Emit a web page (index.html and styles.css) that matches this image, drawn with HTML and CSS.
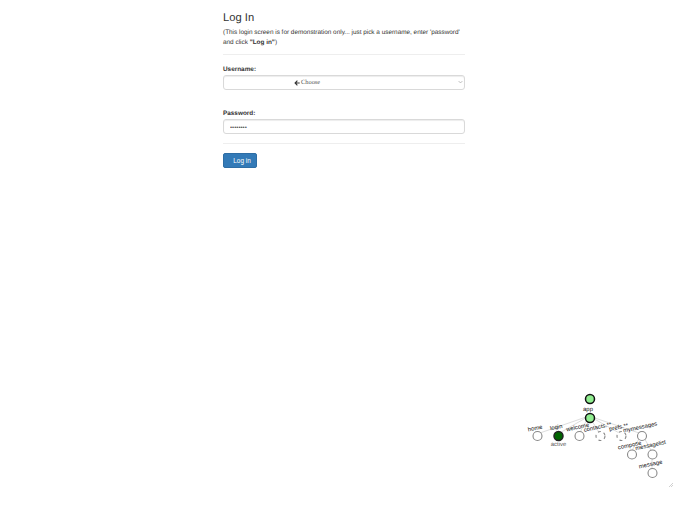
FILE: index.html
```html
<!DOCTYPE html>
<html lang="en">
<head>
    <meta charset="UTF-8">
    <title>Log In</title>
    <link rel="stylesheet" href="styles.css">
</head>
<body>
    <div class="container">
        <h3 class="title">Log In</h3>
        <p class="intro">(This login screen is for demonstration only... just pick a username, enter 'password' and click <b>"Log in"</b>)</p>
        <hr>
        <form>
            <div class="field">
                <label>Username:</label>
                <div class="select-box">
                    <span class="choose"><svg class="arrow" viewBox="0 0 10 10"><path d="M5 .5 .5 5 5 9.500 6.300 8.200 4.100 6H9.500V4H4.100L6.300 1.800z"/></svg>Choose</span>
                    <svg class="caret" viewBox="0 0 8 6"><path d="M1 1.500 4 4.500 7 1.500"/></svg>
                </div>
            </div>
            <div class="field">
                <label>Password:</label>
                <input class="password" type="password" value="password">
            </div>
            <hr class="bottom-rule">
            <button type="button" class="login-btn">Log in</button>
        </form>
    </div>

    <!-- state visualizer -->
    <svg class="visualizer" viewBox="0 0 168 120" width="168" height="120">
        <g class="links">
            <path d="M69 31 17 49M69 31 38 49M69 31 59 49M69 31 80 49M69 31 101 49M69 31 122 49M122 49 111 67M122 49 132 67M132 67 132 86"/>
        </g>
        <g class="node-labels">
            <text x="68" y="26" text-anchor="middle">app</text>
            <text transform="translate(15.500 45) rotate(-12)" text-anchor="middle">home</text>
            <text transform="translate(36.500 44) rotate(-12)" text-anchor="middle">login</text>
            <text transform="translate(58 44) rotate(-12)" text-anchor="middle">welcome</text>
            <text transform="translate(78 44) rotate(-12)" text-anchor="middle">contacts.**</text>
            <text transform="translate(99 44) rotate(-12)" text-anchor="middle">prefs.**</text>
            <text transform="translate(120.500 44) rotate(-12)" text-anchor="middle">mymessages</text>
            <text transform="translate(110 62) rotate(-12)" text-anchor="middle">compose</text>
            <text transform="translate(131 62) rotate(-12)" text-anchor="middle">messagelist</text>
            <text transform="translate(131 81) rotate(-12)" text-anchor="middle">message</text>
            <text class="active-label" x="38.500" y="61">active</text>
        </g>
        <circle class="node entered" cx="70" cy="14" r="4.500"/>
        <circle class="node entered" cx="70" cy="33" r="4.500"/>
        <circle class="node" cx="17.500" cy="51" r="4.500"/>
        <circle class="node active" cx="38.500" cy="51" r="4.500"/>
        <circle class="node" cx="59.500" cy="51" r="4.500"/>
        <circle class="node future" cx="80.500" cy="51" r="4.500"/>
        <circle class="node future" cx="101.500" cy="51" r="4.500"/>
        <circle class="node" cx="122" cy="51" r="4.500"/>
        <circle class="node" cx="112" cy="69.500" r="4.500"/>
        <circle class="node" cx="132.500" cy="69.500" r="4.500"/>
        <circle class="node" cx="132.500" cy="88" r="4.500"/>
        <path class="grip" d="M149 102 153 98M151 102 153 100"/>
    </svg>
</body>
</html>
```

FILE: styles.css
```css
body {
    margin: 0;
    height: 512px;
    overflow: hidden;
    position: relative;
    background-color: #fff;
    font-family: "Liberation Sans", Arial, sans-serif;
    color: #333;
    text-rendering: geometricPrecision;
}
.container {
    width: 242px;
    margin: 0 auto;
    padding-top: 12px;
}
.title {
    margin: 0 0 3px;
    font-size: 11.200px;
    font-weight: 500;
    line-height: 13px;
}
.intro {
    margin: 0;
    font-size: 6.400px;
    line-height: 10px;
}
hr {
    border: 0;
    border-top: 1px solid #eee;
    margin: 6px 0 10px;
}
label {
    display: block;
    font-size: 6.400px;
    font-weight: bold;
    line-height: 9px;
    margin-bottom: 1px;
}
.field {
    margin-bottom: 19px;
}
.select-box {
    box-sizing: border-box;
    height: 15px;
    padding-left: 70px;
    border: 1px solid #d9d9d9;
    border-radius: 3px;
    display: flex;
    align-items: center;
    position: relative;
    box-shadow: inset 0 1px 1px rgba(0, 0, 0, .075);
}
.choose {
    font-family: "Liberation Serif", serif;
    font-size: 6.400px;
    color: #555;
    display: flex;
    align-items: center;
    gap: 1px;
}
.arrow {
    width: 6px;
    height: 6px;
    fill: #333;
}
.caret {
    position: absolute;
    right: 1px;
    top: 4px;
    width: 5px;
    height: 4px;
    fill: none;
    stroke: #999;
    stroke-width: 1;
}
.password {
    display: block;
    box-sizing: border-box;
    width: 100%;
    height: 15px;
    padding: 0 6px;
    border: 1px solid #d9d9d9;
    border-radius: 3px;
    font-size: 6px;
    color: #555;
    box-shadow: inset 0 1px 1px rgba(0, 0, 0, .075);
}
.bottom-rule {
    margin: -10px 0 9px;
}
.login-btn {
    display: block;
    box-sizing: border-box;
    width: 34px;
    height: 15px;
    padding: 0 0 0 4px;
    background-color: #337ab7;
    border: 1px solid #2e6da4;
    border-radius: 2px;
    color: #fff;
    font-family: inherit;
    font-size: 6.400px;
}
.visualizer {
    position: absolute;
    left: 520px;
    top: 385px;
}
.links path {
    fill: none;
    stroke: #ddd;
    stroke-width: 1;
}
.node-labels text {
    font-size: 5.900px;
    fill: #111;
}
.node-labels .active-label {
    text-anchor: middle;
    fill: #555;
}
.node {
    fill: #fff;
    stroke: #888;
    stroke-width: 1.100;
}
.node.entered {
    fill: #90ee90;
    stroke: #111;
    stroke-width: 1.500;
}
.node.active {
    fill: #006400;
    stroke: #222;
    stroke-width: 1.500;
}
.node.future {
    stroke-dasharray: 3 3;
}
.grip {
    fill: none;
    stroke: #bbb;
    stroke-width: .7;
}
```
